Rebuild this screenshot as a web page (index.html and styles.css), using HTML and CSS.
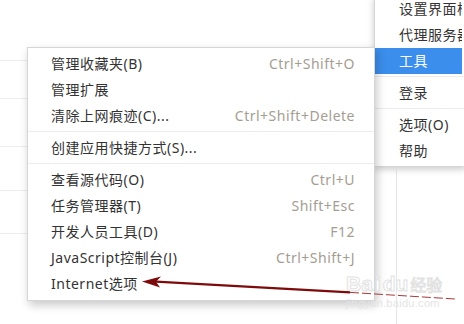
FILE: index.html
```html
<!DOCTYPE html>
<html lang="zh-CN">
<head>
  <meta charset="UTF-8" />
  <title>工具菜单</title>
  <link rel="stylesheet" href="styles.css">
</head>
<body>
  <div class="page">
    <div class="page-rows">
      <div class="page-row r1"></div>
      <div class="page-row r2"></div>
      <div class="page-row r3"></div>
      <div class="page-row r4"></div>
      <div class="page-row r5"></div>
    </div>
    <div class="page-col"></div>
  </div>

  <div class="menu main-menu">
    <div class="item">设置界面样式</div>
    <div class="item">代理服务器设置</div>
    <div class="item active">工具</div>
    <div class="sep"></div>
    <div class="item">登录</div>
    <div class="sep"></div>
    <div class="item">选项(O)</div>
    <div class="item">帮助</div>
  </div>

  <div class="menu sub-menu">
    <div class="item"><span>管理收藏夹(B)</span><span class="key">Ctrl+Shift+O</span></div>
    <div class="item"><span>管理扩展</span></div>
    <div class="item"><span>清除上网痕迹(C)...</span><span class="key">Ctrl+Shift+Delete</span></div>
    <div class="sep"></div>
    <div class="item"><span>创建应用快捷方式(S)...</span></div>
    <div class="sep"></div>
    <div class="item"><span>查看源代码(O)</span><span class="key">Ctrl+U</span></div>
    <div class="item"><span>任务管理器(T)</span><span class="key">Shift+Esc</span></div>
    <div class="item"><span>开发人员工具(D)</span><span class="key">F12</span></div>
    <div class="item"><span>JavaScript控制台(J)</span><span class="key">Ctrl+Shift+J</span></div>
    <div class="item"><span>Internet选项</span></div>
  </div>

  <div class="watermark">
    <div class="wm-logo">Ba<span class="paw">i</span>du<span class="wm-cn">经验</span></div>
    <div class="wm-url">jingyan.baidu.com</div>
  </div>

  <svg class="arrow" width="464" height="324" viewBox="0 0 464 324">
    <path d="M156 281.6 L350 292.4" stroke="#7d0b0b" stroke-width="2.4" fill="none"/>
    <path d="M350 292.4 L455 299" stroke="#a8383a" stroke-width="1" stroke-dasharray="9 3" fill="none"/>
    <polygon points="142,281.5 161,276.5 156,281.8 160,287.5" fill="#7d0b0b"/>
  </svg>
</body>
</html>
```

FILE: styles.css
```css
body {
  margin: 0;
  width: 464px;
  height: 324px;
  position: relative;
  overflow: hidden;
  background-color: #fff;
  font-family: "Noto Sans", "Noto Sans CJK SC", sans-serif;
  font-size: 14px;
  color: #333;
}

.page {
  display: flex;
  height: 100%;
}

.page-rows {
  width: 30px;
}

.page-row {
  border-bottom: 1px solid #ececec;
}

.r1 { height: 60px; }
.r2 { height: 37px; }
.r3 { height: 47px; }
.r4 { height: 43px; }
.r5 { height: 42px; }

.page-col {
  margin-left: 366px;
  margin-top: 170px;
  border-left: 1px solid #e6e6e6;
}

.menu {
  position: absolute;
  background-color: #fff;
  box-sizing: border-box;
  letter-spacing: 0.5px;
}

.item {
  height: 26px;
  line-height: 26px;
  white-space: nowrap;
}

.sep {
  height: 6px;
  position: relative;
}

.sep::after {
  content: "";
  position: absolute;
  left: 0;
  right: 0;
  top: 2px;
  border-top: 1px solid #ececec;
}

.main-menu {
  left: 374px;
  top: -4px;
  width: 92px;
  padding-bottom: 2px;
  border-left: 1px solid #d4d4d4;
  box-shadow: 0 3px 7px rgba(0, 0, 0, 0.22);
}

.main-menu .item {
  padding-left: 24px;
  margin-right: 4px;
  overflow: hidden;
}

.main-menu .item.active {
  background-color: #3b8eec;
  color: #fff;
}

.sub-menu {
  left: 27px;
  top: 47px;
  width: 348px;
  padding: 3px 0;
  border: 1px solid #d6d6d6;
  box-shadow: 2px 4px 9px rgba(0, 0, 0, 0.22);
  z-index: 2;
}

.sub-menu .item {
  display: flex;
  justify-content: space-between;
  padding: 0 19px 0 23px;
}

.key {
  color: #a59d92;
}

.watermark {
  position: absolute;
  left: 346px;
  top: 272px;
  color: #fff;
  -webkit-text-stroke: 1px #e2e2e2;
  font-family: "Liberation Sans", sans-serif;
  z-index: 3;
}

.wm-logo {
  font-size: 21px;
  font-weight: bold;
  line-height: 24px;
}

.paw {
  margin: 0 2px;
}

.wm-cn {
  font-family: "Noto Sans CJK SC", sans-serif;
  font-size: 16px;
  font-weight: normal;
  margin-left: 2px;
}

.wm-url {
  font-size: 11px;
  line-height: 14px;
  letter-spacing: 0.3px;
  -webkit-text-stroke: 0;
  color: #e4e4e4;
}

.arrow {
  position: absolute;
  left: 0;
  top: 0;
  z-index: 4;
}
```
